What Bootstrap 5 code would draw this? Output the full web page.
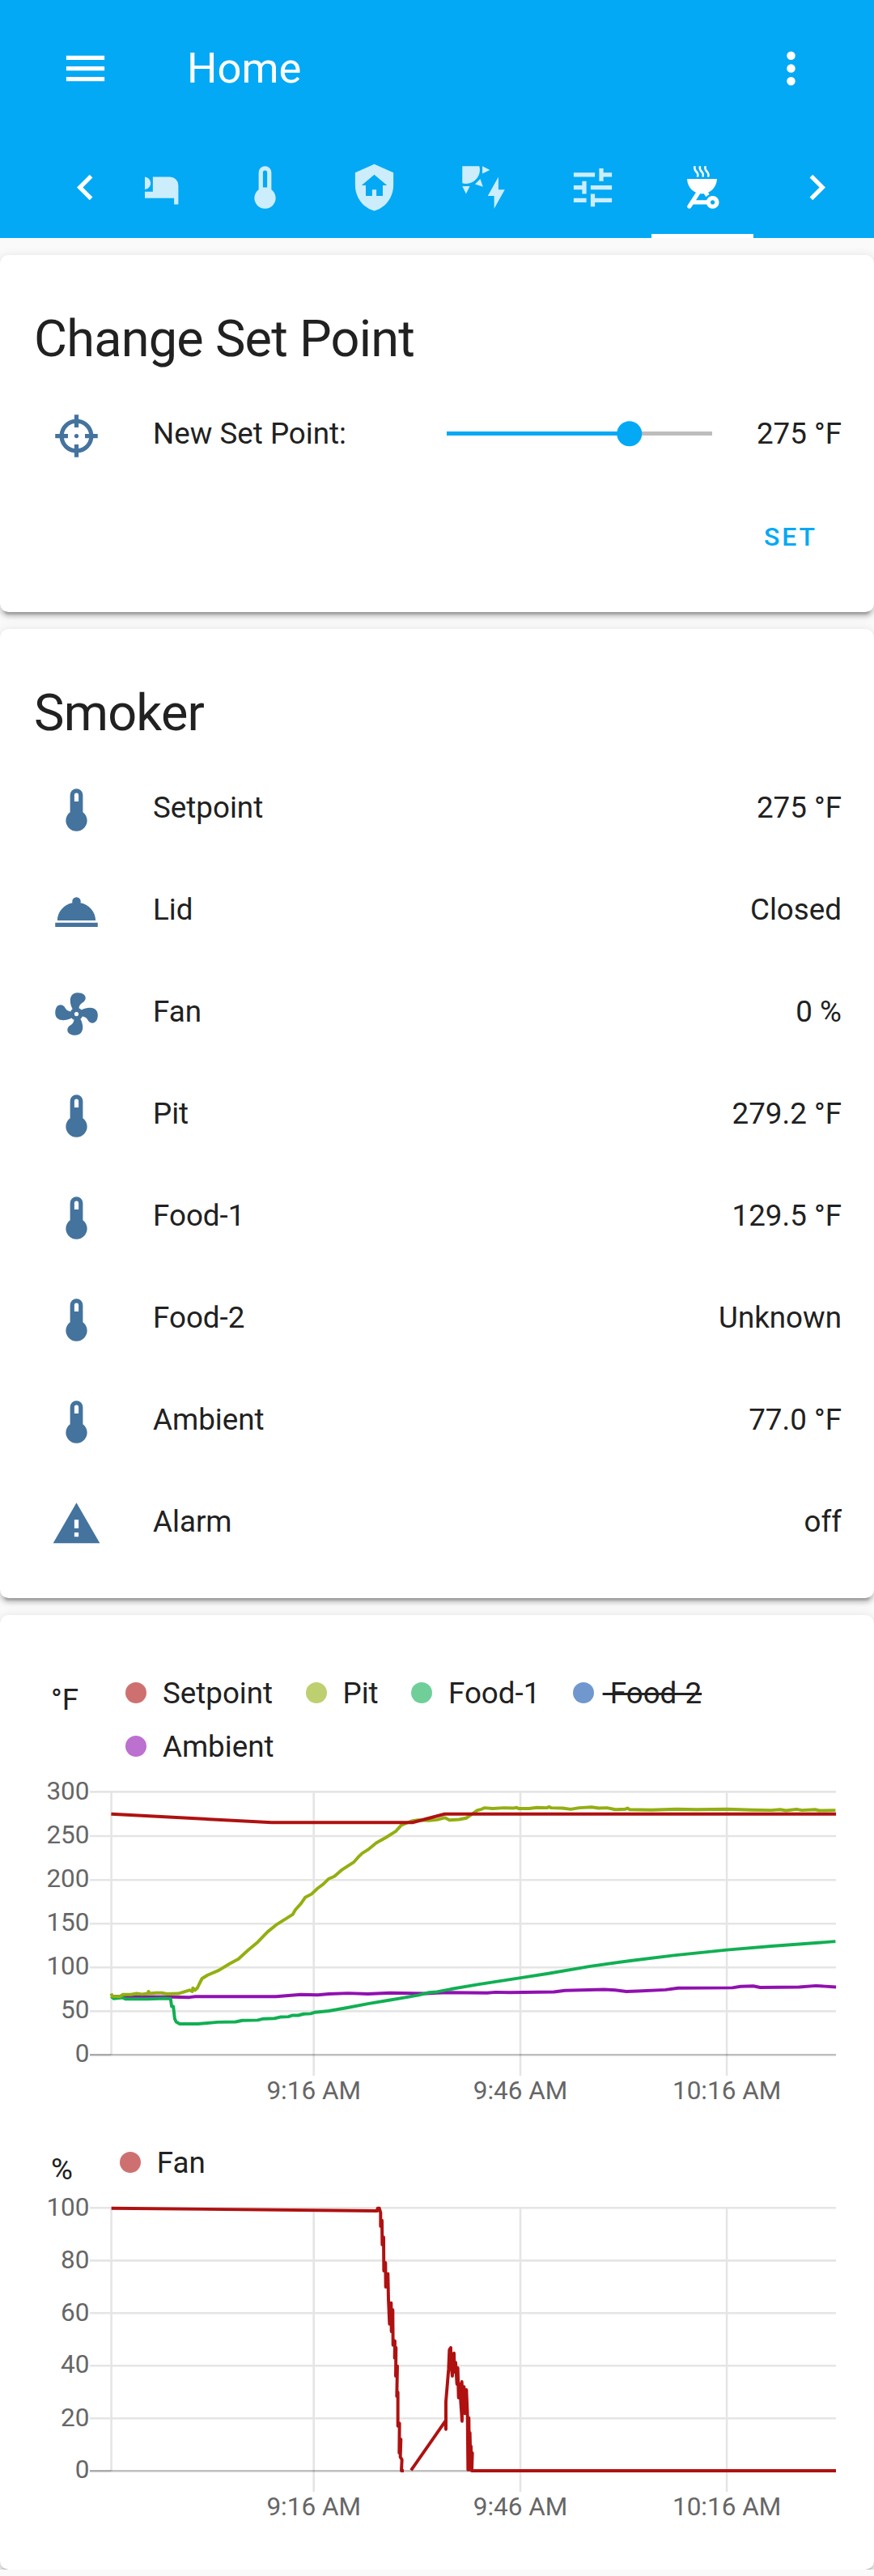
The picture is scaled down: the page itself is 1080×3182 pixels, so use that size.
<!DOCTYPE html>
<html lang="en">
<head>
<meta charset="utf-8">
<meta name="viewport" content="width=device-width, initial-scale=1">
<title>Home</title>
<link href="https://cdn.jsdelivr.net/npm/bootstrap@5.3.0/dist/css/bootstrap.min.css" rel="stylesheet">
<style>
  body { font-family: Roboto, "Noto Sans", sans-serif; font-size: 36.75px; line-height: 1.2; color: #212121; background: #fafafa; overflow-x: hidden; }
  .ico { width: 63px; height: 63px; fill: currentColor; flex: none; display: block; }
  .app-head { background: #03a9f4; height: 294px; }
  .tool-row { height: 168px; padding-left: 73.5px; padding-right: 71px; }
  .app-title { font-size: 52.5px; margin-left: 94.5px; }
  .tab-row { height: 126px; padding-left: 73.5px; padding-right: 38.8px; }
  .tab-view { margin-left: 42.5px; width: 755px; overflow: hidden; height: 126px; }
  .tab-strip { margin-left: -50.2px; gap: 9.2px; }
  .tab-strip .nav-link { width: 126px; height: 126px; padding: 0; flex: none; color: #fff; border-radius: 0; opacity: .8; border-bottom: 5px solid transparent; padding-top: 5px; }
  .tab-strip .nav-link.active { opacity: 1; border-color: #fff; }
  .panel { background: #fff; border-radius: 10.5px; box-shadow: 0 5.25px 5.25px rgba(0,0,0,.14), 0 2.6px 13px rgba(0,0,0,.12), 0 7.9px 2.6px -5.25px rgba(0,0,0,.2); }
  .panel-title { height: 171px; padding: 63.5px 42px 0; font-size: 63px; line-height: 80px; letter-spacing: -.012em; font-weight: 400; margin: 0; }
  .entity { height: 105px; padding: 0 40px 0 42px; }
  .entity + .entity { margin-top: 21px; }
  .badge-box { width: 105px; margin-right: 42px; color: #44739e; }
  .entity-text { padding-bottom: 4px; }
  .slide { width: 328px; height: 5.25px; margin-right: 55px; margin-bottom: 6px; background: #bdbdbd; }
  .slide-fill { background: #03a9f4; height: 100%; }
  .slide-knob { width: 31.5px; height: 31.5px; background: #03a9f4; }
  .set-row { height: 165px; padding-right: 70px; padding-bottom: 21px; }
  .set-btn { font-size: 32px; font-weight: 500; letter-spacing: 2.9px; color: #03a9f4; padding: 0; border: 0; line-height: 36px; }
  .unit-label { margin-left: 63px; margin-right: 58px; line-height: 66px; padding-top: 8.5px; height: 66px; }
  .key-list { column-gap: 40.5px; width: 883px; }
  .key-list li { height: 66px; }
  .key-text { padding-top: 2px; }
  .dot { width: 26.25px; height: 26.25px; margin-right: 10.5px; opacity: .6; }
  .plot { display: block; width: 1080px; font-size: 31.5px; fill: #666; }
  .grid-lines { stroke: rgba(0,0,0,.1); stroke-width: 2.625; fill: none; }
  .zero-line { stroke: rgba(0,0,0,.25); stroke-width: 2.625; }
  .series { fill: none; stroke-width: 3.94; vector-effect: non-scaling-stroke; stroke-linejoin: round; }
</style>
</head>
<body>
<svg width="0" height="0" class="position-absolute" aria-hidden="true">
  <symbol id="i-thermo" viewBox="0 0 24 24"><path d="M15 13V5A3 3 0 0 0 9 5V13A5 5 0 1 0 15 13M12 4A1 1 0 0 1 13 5V8H11V5A1 1 0 0 1 12 4Z"/></symbol>
</svg>

<header class="app-head text-white">
  <div class="tool-row d-flex align-items-center">
    <svg class="ico" viewBox="0 0 24 24"><path d="M3,6H21V8H3V6M3,11H21V13H3V11M3,16H21V18H3V16Z"/></svg>
    <div class="app-title">Home</div>
    <svg class="ico ms-auto" viewBox="0 0 24 24"><path d="M12,16A2,2 0 0,1 14,18A2,2 0 0,1 12,20A2,2 0 0,1 10,18A2,2 0 0,1 12,16M12,10A2,2 0 0,1 14,12A2,2 0 0,1 12,14A2,2 0 0,1 10,12A2,2 0 0,1 12,10M12,4A2,2 0 0,1 14,6A2,2 0 0,1 12,8A2,2 0 0,1 10,6A2,2 0 0,1 12,4Z"/></svg>
  </div>
  <div class="tab-row d-flex align-items-center">
    <svg class="ico" viewBox="0 0 24 24"><path d="M15.41,16.58L10.83,12L15.41,7.41L14,6L8,12L14,18L15.41,16.58Z"/></svg>
    <div class="tab-view">
      <nav class="nav tab-strip flex-nowrap">
        <a class="nav-link d-flex align-items-center justify-content-center"><svg class="ico" viewBox="0 0 24 24"><path d="M19,7H11V14H3V5H1V20H3V17H21V20H23V11A4,4 0 0,0 19,7M7,13A3,3 0 0,0 10,10A3,3 0 0,0 7,7A3,3 0 0,0 4,10A3,3 0 0,0 7,13Z"/></svg></a>
        <a class="nav-link d-flex align-items-center justify-content-center"><svg class="ico" viewBox="0 0 24 24"><path d="M15 13V5A3 3 0 0 0 9 5V13A5 5 0 1 0 15 13M12 4A1 1 0 0 1 13 5V12H11V5A1 1 0 0 1 12 4Z"/></svg></a>
        <a class="nav-link d-flex align-items-center justify-content-center"><svg class="ico" viewBox="0 0 24 24"><path d="M11,13H13V16H16V11H18L12,6L6,11H8V16H11V13M12,1L21,5V11C21,16.55 17.16,21.74 12,23C6.84,21.74 3,16.55 3,11V5L12,1Z"/></svg></a>
        <a class="nav-link d-flex align-items-center justify-content-center"><svg class="ico" viewBox="0 0 24 24"><path d="M11.45,2V5.55L15,3.77L11.45,2M10.45,8L8,10.46L11.75,11.71L10.45,8M2,11.45L3.77,15L5.55,11.45H2M10,2H2V10C2.57,10.17 3.17,10.25 3.77,10.25C7.35,10.26 10.26,7.35 10.27,3.75C10.26,3.16 10.17,2.57 10,2M17,22V16H14L19,7V13H22L17,22Z"/></svg></a>
        <a class="nav-link d-flex align-items-center justify-content-center"><svg class="ico" viewBox="0 0 24 24"><path d="M3,17V19H9V17H3M3,5V7H13V5H3M13,21V19H21V17H13V15H11V21H13M7,9V11H3V13H7V15H9V9H7M21,13V11H11V13H21M15,9H17V7H21V5H17V3H15V9Z"/></svg></a>
        <a class="nav-link active d-flex align-items-center justify-content-center"><svg class="ico" viewBox="0 0 24 24"><path d="M17 22c1.66 0 3-1.34 3-3s-1.34-3-3-3c-1.3 0-2.4.84-2.82 2H9.14l1.99-3.06c.29.04.58.06.87.06s.58-.02.87-.06l1.02 1.57c.42-.53.96-.95 1.6-1.21l-.6-.93C17.31 13.27 19 10.84 19 8H5c0 2.84 1.69 5.27 4.12 6.37l-3.95 6.08c-.3.46-.17 1.08.29 1.38.46.3 1.08.17 1.38-.29l1-1.55h6.34C14.6 21.16 15.7 22 17 22zm0-4c.55 0 1 .45 1 1s-.45 1-1 1-1-.45-1-1 .45-1 1-1zM9.41 7h1c.15-1.15.23-1.64-.89-2.96-.42-.5-.68-.77-.46-2.04h-.99c-.2 1.11.05 1.96.88 2.96C9.18 5.22 9.85 5.67 9.41 7zM11.89 7h1c.15-1.15.23-1.64-.89-2.96-.42-.5-.68-.78-.46-2.04h-.99c-.2 1.11.05 1.96.88 2.96C11.66 5.22 12.33 5.67 11.89 7zM14.41 7h1c.15-1.15.23-1.64-.89-2.96-.42-.5-.68-.77-.46-2.04h-.99c-.2 1.11.05 1.96.88 2.96C14.18 5.22 14.85 5.67 14.41 7z"/></svg></a>
      </nav>
    </div>
    <svg class="ico ms-auto" viewBox="0 0 24 24"><path d="M8.59,16.58L13.17,12L8.59,7.41L10,6L16,12L10,18L8.59,16.58Z"/></svg>
  </div>
</header>

<main class="d-flex flex-column" style="gap:21px;padding-top:21px">
  <section class="panel">
    <h1 class="panel-title">Change Set Point</h1>
    <div class="entity d-flex align-items-center">
      <div class="badge-box d-flex justify-content-center"><svg class="ico" viewBox="0 0 24 24"><path d="M11,2V4.07C7.38,4.53 4.53,7.38 4.07,11H2V13H4.07C4.53,16.62 7.38,19.47 11,19.93V22H13V19.93C16.62,19.47 19.47,16.62 19.93,13H22V11H19.93C19.47,7.38 16.62,4.53 13,4.07V2M11,6.08V8H13V6.09C15.5,6.5 17.5,8.5 17.92,11H16V13H17.91C17.5,15.5 15.5,17.5 13,17.92V16H11V17.91C8.5,17.5 6.5,15.5 6.08,13H8V11H6.09C6.5,8.5 8.5,6.5 11,6.08M12,11A1,1 0 0,0 11,12A1,1 0 0,0 12,13A1,1 0 0,0 13,12A1,1 0 0,0 12,11Z"/></svg></div>
      <div class="entity-text flex-grow-1">New Set Point:</div>
      <div class="slide position-relative">
        <div class="slide-fill" style="width:68.8%"></div>
        <div class="slide-knob rounded-circle position-absolute top-50 translate-middle" style="left:68.8%"></div>
      </div>
      <div class="entity-text text-end">275 °F</div>
    </div>
    <div class="set-row d-flex align-items-center justify-content-end"><button class="btn set-btn" type="button">SET</button></div>
  </section>

  <section class="panel" style="padding-bottom:39px">
    <h2 class="panel-title">Smoker</h2>
    <div class="entity d-flex align-items-center">
      <div class="badge-box d-flex justify-content-center"><svg class="ico"><use href="#i-thermo"/></svg></div>
      <div class="entity-text flex-grow-1">Setpoint</div><div class="entity-text">275 °F</div>
    </div>
    <div class="entity d-flex align-items-center">
      <div class="badge-box d-flex justify-content-center"><svg class="ico" viewBox="0 0 24 24"><path d="M12,5A2,2 0 0,1 14,7C14,7.24 13.96,7.47 13.88,7.69C17.95,8.5 21,11.91 21,16H3C3,11.91 6.05,8.5 10.12,7.69C10.04,7.47 10,7.24 10,7A2,2 0 0,1 12,5M22,19H2V17H22V19Z"/></svg></div>
      <div class="entity-text flex-grow-1">Lid</div><div class="entity-text">Closed</div>
    </div>
    <div class="entity d-flex align-items-center">
      <div class="badge-box d-flex justify-content-center"><svg class="ico" viewBox="0 0 24 24"><path d="M12,11A1,1 0 0,0 11,12A1,1 0 0,0 12,13A1,1 0 0,0 13,12A1,1 0 0,0 12,11M12.5,2C17,2 17.11,5.57 14.75,6.75C13.76,7.24 13.32,8.29 13.13,9.22C13.61,9.42 14.03,9.73 14.35,10.13C18.05,8.13 22.03,8.92 22.03,12.5C22.03,17 18.46,17.1 17.28,14.73C16.78,13.74 15.72,13.3 14.79,13.11C14.59,13.59 14.28,14 13.88,14.34C15.87,18.03 15.08,22 11.5,22C7,22 6.91,18.42 9.27,17.24C10.25,16.75 10.69,15.71 10.89,14.79C10.4,14.59 9.97,14.27 9.65,13.87C5.96,15.85 2,15.07 2,11.5C2,7 5.56,6.89 6.74,9.26C7.24,10.25 8.29,10.68 9.22,10.87C9.41,10.39 9.73,9.97 10.14,9.65C8.15,5.96 8.94,2 12.5,2Z"/></svg></div>
      <div class="entity-text flex-grow-1">Fan</div><div class="entity-text">0 %</div>
    </div>
    <div class="entity d-flex align-items-center">
      <div class="badge-box d-flex justify-content-center"><svg class="ico"><use href="#i-thermo"/></svg></div>
      <div class="entity-text flex-grow-1">Pit</div><div class="entity-text">279.2 °F</div>
    </div>
    <div class="entity d-flex align-items-center">
      <div class="badge-box d-flex justify-content-center"><svg class="ico"><use href="#i-thermo"/></svg></div>
      <div class="entity-text flex-grow-1">Food-1</div><div class="entity-text">129.5 °F</div>
    </div>
    <div class="entity d-flex align-items-center">
      <div class="badge-box d-flex justify-content-center"><svg class="ico"><use href="#i-thermo"/></svg></div>
      <div class="entity-text flex-grow-1">Food-2</div><div class="entity-text">Unknown</div>
    </div>
    <div class="entity d-flex align-items-center">
      <div class="badge-box d-flex justify-content-center"><svg class="ico"><use href="#i-thermo"/></svg></div>
      <div class="entity-text flex-grow-1">Ambient</div><div class="entity-text">77.0 °F</div>
    </div>
    <div class="entity d-flex align-items-center">
      <div class="badge-box d-flex justify-content-center"><svg class="ico" viewBox="0 0 24 24"><path d="M13,14H11V10H13M13,18H11V16H13M1,21H23L12,2L1,21Z"/></svg></div>
      <div class="entity-text flex-grow-1">Alarm</div><div class="entity-text">off</div>
    </div>
  </section>

  <section class="panel" style="padding-top:63px;padding-bottom:54px">
    <div class="d-flex align-items-start">
      <div class="unit-label">°F</div>
      <ul class="key-list list-unstyled d-flex flex-wrap mb-0">
        <li class="d-flex align-items-center"><span class="dot rounded-circle" style="background:#af1111"></span><span class="key-text">&nbsp;Setpoint</span></li>
        <li class="d-flex align-items-center"><span class="dot rounded-circle" style="background:#93af11"></span><span class="key-text">&nbsp;Pit</span></li>
        <li class="d-flex align-items-center"><span class="dot rounded-circle" style="background:#11af53"></span><span class="key-text">&nbsp;Food-1</span></li>
        <li class="d-flex align-items-center"><span class="dot rounded-circle" style="background:#1153af"></span><span class="key-text text-decoration-line-through">&nbsp;Food-2</span></li>
        <li class="d-flex align-items-center"><span class="dot rounded-circle" style="background:#9011af"></span><span class="key-text">&nbsp;Ambient</span></li>
      </ul>
    </div>
    <svg class="plot" height="448" viewBox="0 2190 1080 448">
      <path class="grid-lines" d="M111 2213.4H1033M111 2268H1033M111 2322.2H1033M111 2376.3H1033M111 2430.2H1033M111 2484.4H1033M137.6 2213V2538.3M387.7 2213V2564M643 2213V2564M898.1 2213V2564"/>
      <path class="grid-lines" d="M111 2538.3H137"/><path class="zero-line" d="M111 2538.3H1033"/>
      <g text-anchor="end">
        <text x="110.5" y="2222.6">300</text><text x="110.5" y="2276.7">250</text><text x="110.5" y="2330.7">200</text><text x="110.5" y="2385">150</text><text x="110.5" y="2439">100</text><text x="110.5" y="2492.8">50</text><text x="110.5" y="2546.5">0</text>
      </g>
      <g text-anchor="middle"><text x="387.7" y="2593">9:16 AM</text><text x="643" y="2593">9:46 AM</text><text x="898.1" y="2593">10:16 AM</text></g>
      <g transform="translate(0 1960) scale(.34436 .42088)">
        <polyline class="series" stroke="#9011af" points="399,1203 620,1204 680,1205 700,1203 940,1203 990,1203 1080,1197 1140,1198 1180,1195 1250,1193 1320,1195 1400,1192 1530,1194 1568,1192 1608,1191 1748,1192 1778,1190 1828,1191 1988,1189 2028,1185 2168,1182 2208,1184 2248,1188 2288,1187 2388,1183 2433,1178 2628,1177 2658,1173 2703,1172 2728,1176 2868,1175 2928,1171 3000,1175"/>
        <polyline class="series" stroke="#11af53" points="399,1203 408,1209 440,1206 450,1210 530,1210 590,1208 612,1209 616,1232 622,1232 627,1268 632,1277 645,1283 710,1283 780,1278 845,1277 870,1273 925,1272 945,1268 985,1267 1005,1263 1035,1262 1050,1258 1070,1258 1090,1254 1115,1253 1130,1249 1180,1245 1250,1235 1320,1224 1400,1213 1450,1206 1500,1199 1540,1191 1568,1189 1618,1181 1718,1167 1868,1148 1968,1135 2118,1114 2268,1097 2418,1082 2608,1066 2768,1055 2998,1041"/>
        <polyline class="series" stroke="#93af11" points="399,1194 403,1202 430,1203 440,1197 470,1197 490,1194 510,1196 530,1194 533,1188 537,1194 560,1192 580,1192 600,1195 640,1194 680,1184 690,1188 692,1178 700,1184 708,1178 715,1166 725,1150 745,1140 785,1126 825,1106 855,1093 890,1067 925,1043 960,1013 990,993 1050,962 1060,948 1080,930 1095,912 1118,902 1140,885 1160,873 1180,857 1200,850 1225,832 1270,808 1285,794 1300,782 1320,772 1350,752 1385,736 1420,718 1440,700 1455,695 1480,687 1500,685 1540,686 1568,684 1596,678 1613,685 1648,683 1673,679 1693,668 1713,656 1728,653 1738,649 1768,651 1808,649 1840,650 1855,648 1860,651 1898,651 1928,648 1963,649 1971,646 1978,649 2018,650 2048,653 2078,649 2123,647 2148,650 2178,649 2208,654 2243,653 2252,650 2260,654 2338,655 2428,653 2498,654 2608,653 2700,655 2768,656 2800,654 2820,657 2858,653 2878,656 2925,654 2940,657 2998,656"/>
        <polyline class="series" stroke="#af1111" points="399,667 975,692 1480,692 1596,667 3000,667"/>
      </g>
    </svg>
    <div class="d-flex align-items-start">
      <div class="unit-label">%</div>
      <ul class="key-list list-unstyled d-flex mb-0">
        <li class="d-flex align-items-center"><span class="dot rounded-circle" style="background:#af1111"></span><span class="key-text">&nbsp;Fan</span></li>
      </ul>
    </div>
    <svg class="plot" height="416" viewBox="0 2704 1080 416">
      <path class="grid-lines" d="M111 2727.3H1033M111 2792.4H1033M111 2857.3H1033M111 2922.2H1033M111 2987.3H1033M137.6 2727V3052.3M387.7 2727V3078M643 2727V3078M898.1 2727V3078"/>
      <path class="grid-lines" d="M111 3052.3H137"/><path class="zero-line" d="M111 3052.3H1033"/>
      <g text-anchor="end">
        <text x="110.5" y="2736.5">100</text><text x="110.5" y="2801.5">80</text><text x="110.5" y="2866.5">60</text><text x="110.5" y="2931.3">40</text><text x="110.5" y="2996.5">20</text><text x="110.5" y="3060.8">0</text>
      </g>
      <g text-anchor="middle"><text x="387.7" y="3107">9:16 AM</text><text x="643" y="3107">9:46 AM</text><text x="898.1" y="3107">10:16 AM</text></g>
      <g transform="translate(440 2700) scale(.33333)">
        <polyline class="series" stroke="#af1111" points="-907,83 78,93 80,83 86,83 91,100 91,150 96,128 97,218 102,190 103,315 109,285 110,375 118,326 120,420 124,512 130,434 131,540 136,460 137,590 144,575 143,638 148,600 147,705 153,668 151,780 155,765 155,890 161,880 160,990 166,940 164,1005 170,1015 168,1056 177,1056"/>
        <polyline class="series" stroke="#af1111" points="204,1054 331,872 333,902 333,800 338,740 343,680 346,608 351,600 352,660 357,705 358,640 363,620 365,690 369,655 374,735 377,675 380,785 386,735 388,800 393,872 392,726 397,840 400,745 404,844 409,756 413,850 415,1052 418,860 420,1052 422,915 425,1050 426,965 428,1050 431,990 429,1056 1779,1056"/>
      </g>
    </svg>
  </section>
</main>
<script src="https://cdn.jsdelivr.net/npm/bootstrap@5.3.0/dist/js/bootstrap.bundle.min.js"></script>
</body>
</html>
